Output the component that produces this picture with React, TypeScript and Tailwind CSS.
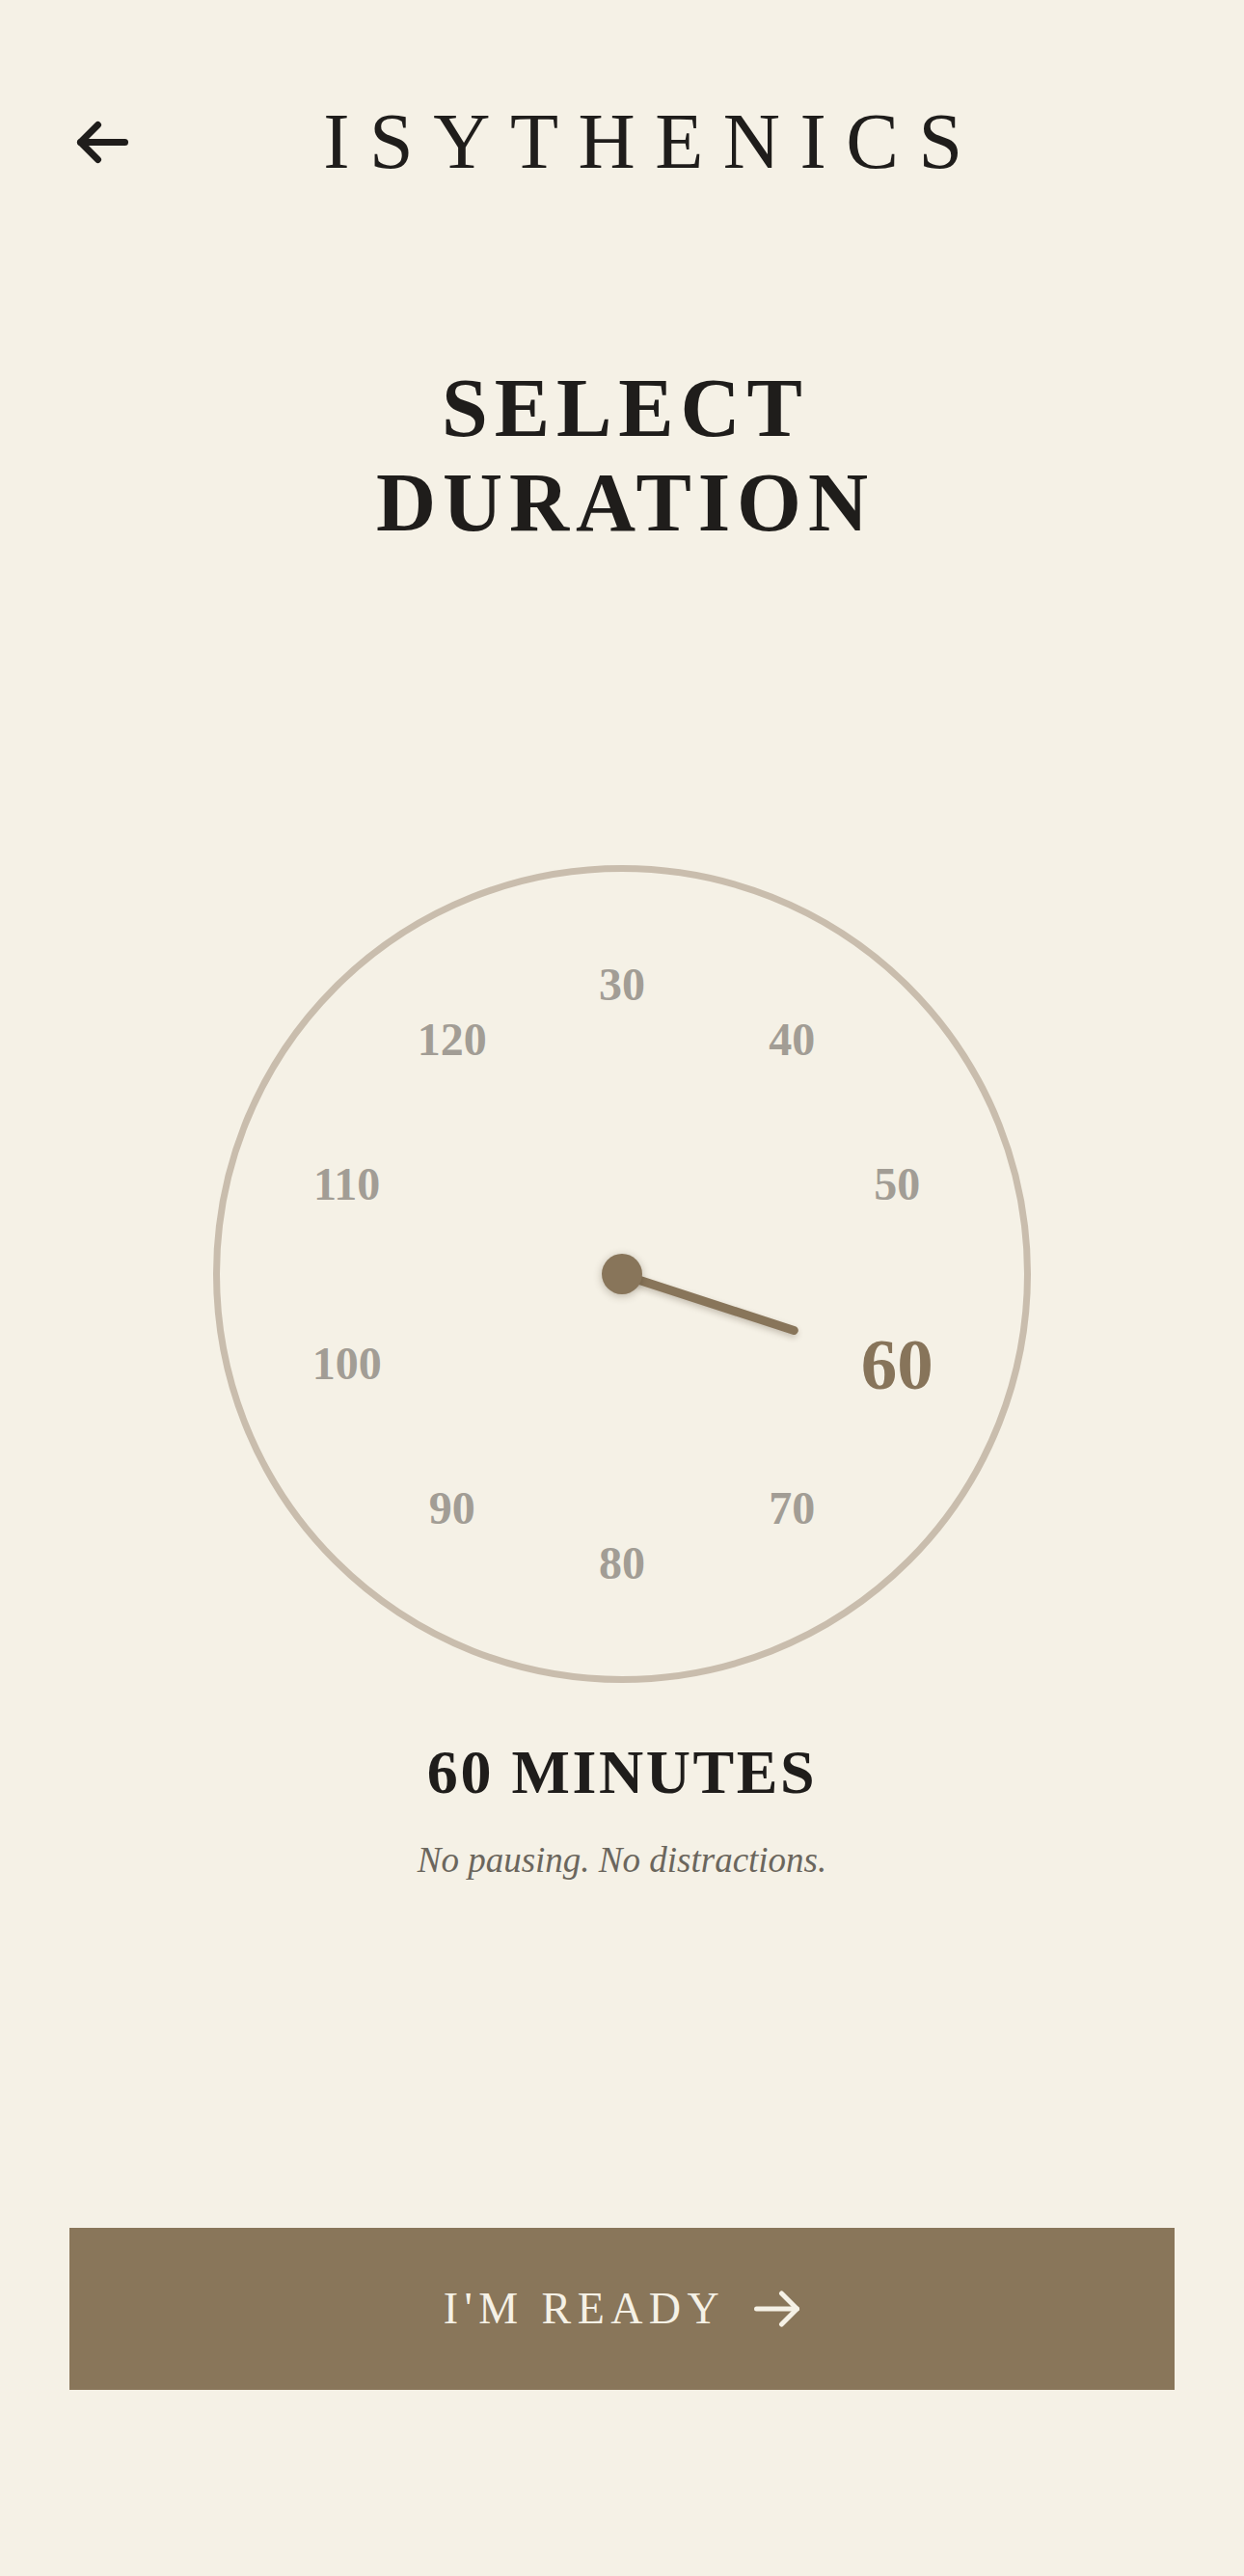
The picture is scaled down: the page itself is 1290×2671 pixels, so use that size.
const marks = [30, 40, 50, 60, 70, 80, 90, 100, 110, 120];
const selected = 60;

function BackArrow() {
  return (
    <svg width="60" height="51" viewBox="0 0 60 51" fill="none" stroke="#1f1d1b" strokeWidth="7" strokeLinecap="round" strokeLinejoin="round">
      <path d="M25.5 7.5 7.5 25.5 25.5 43.5" />
      <path d="M7.5 25.5H53.5" />
    </svg>
  );
}

function NextArrow() {
  return (
    <svg width="48" height="38" viewBox="0 0 48 38" fill="none" stroke="#f5f1e6" strokeWidth="5" strokeLinecap="round" strokeLinejoin="round">
      <path d="M28.5 3 44.5 19 28.5 35" />
      <path d="M2.5 19H44.5" />
    </svg>
  );
}

function Dial() {
  const c = 417;
  const r = 300;
  const handAngle = 18; // 60 sits at 108deg from the top
  return (
    <div className="relative w-[848px] h-[848px] rounded-full border-[7px] border-[#c9bdad]">
      {marks.map((m, i) => {
        const a = (i * 36 * Math.PI) / 180;
        const active = m === selected;
        return (
          <span
            key={m}
            className={
              active
                ? "absolute -translate-x-1/2 -translate-y-1/2 leading-none font-bold text-[75px] text-[#87745a]"
                : "absolute -translate-x-1/2 -translate-y-1/2 leading-none font-bold text-[48px] text-[#a29d95]"
            }
            style={{ left: c + r * Math.sin(a), top: c - r * Math.cos(a) }}
          >
            {m}
          </span>
        );
      })}
      <div
        className="absolute w-[192px] h-[9px] rounded-full bg-[#88755a] origin-left shadow-[0_3px_6px_rgba(60,45,25,0.25)]"
        style={{ left: c, top: c - 4.5, transform: `rotate(${handAngle}deg)` }}
      />
      <div className="absolute left-[396px] top-[396px] w-[42px] h-[42px] rounded-full bg-[#88755a] shadow-[0_2px_8px_rgba(60,45,25,0.3)]" />
    </div>
  );
}

export default function App() {
  return (
    <div className="min-h-[2671px] bg-[#f5f1e6] px-[72px] flex flex-col font-['Liberation_Serif',serif] text-[#1f1d1b]">
      <header className="mt-[106px] h-[82px] flex items-center">
        <button className="w-16 shrink-0 pl-[4px]">
          <BackArrow />
        </button>
        <h1 className="flex-1 text-center text-[82px] leading-none tracking-[0.25em] font-normal">ISYTHENICS</h1>
      </header>

      <h2 className="mt-[186px] text-center text-[86px] leading-[98px] font-bold tracking-[0.08em] pl-[0.08em]">
        SELECT
        <br />
        DURATION
      </h2>

      <div className="mt-[327px] flex justify-center">
        <Dial />
      </div>

      <p className="mt-[61px] text-center text-[64px] leading-none font-bold tracking-[0.04em]">60 MINUTES</p>
      <p className="mt-[40px] text-center text-[37px] leading-none italic text-[#6b665d]">No pausing. No distractions.</p>

      <button className="mt-[363px] h-[168px] w-full bg-[#89765a] flex items-center justify-center gap-[30px] text-[#f5f1e6]">
        <span className="text-[46px] leading-none tracking-[0.14em]">I'M READY</span>
        <NextArrow />
      </button>
    </div>
  );
}
